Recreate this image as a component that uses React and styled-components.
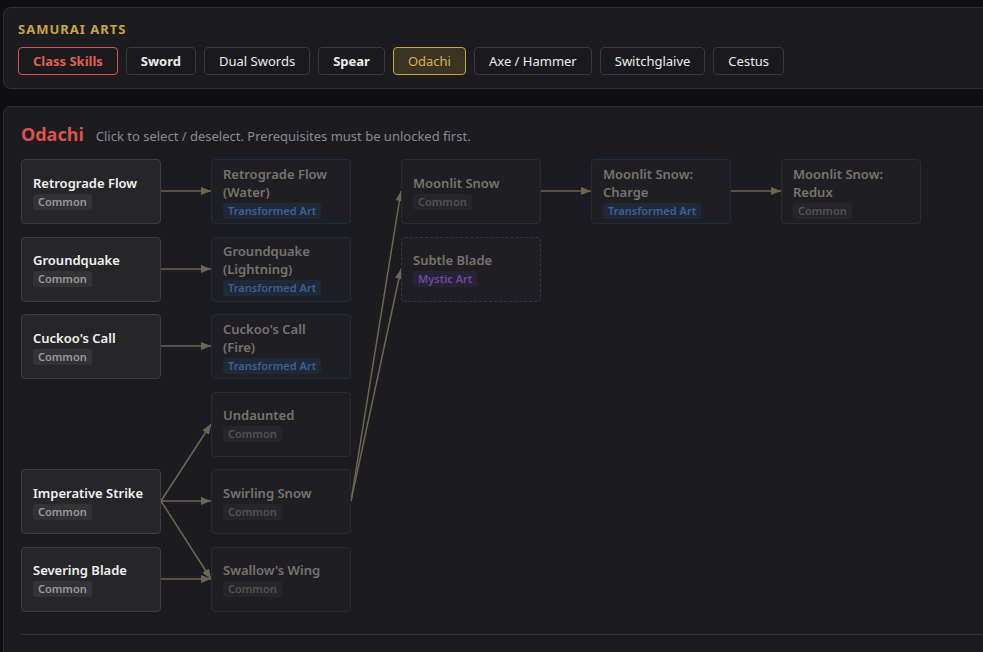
import React from "react";
import styled, { createGlobalStyle } from "styled-components";

const Global = createGlobalStyle`
  html, body { margin: 0; background: #0f0f11; overflow: hidden; }
  body { padding: 7px 0 0 3px; font-family: "Noto Sans", "Open Sans", sans-serif; }
`;

const Panel = styled.section`
  width: 1000px;
  background: #1c1c20;
  border: 1px solid #2e2e33;
  border-radius: 8px;
  box-sizing: border-box;
  padding: ${(p) => p.$pad};
  margin-bottom: ${(p) => p.$mb || 0}px;
`;

const Heading = styled.div`
  color: #c9a640;
  font-size: 13px;
  font-weight: 700;
  letter-spacing: 1px;
  margin-bottom: 9px;
`;

const Tabs = styled.div`
  display: flex;
  gap: 8px;
`;

const Tab = styled.button`
  font-family: inherit;
  font-size: 13px;
  height: 28px;
  padding: 0 14px;
  border-radius: 4px;
  border: 1px solid ${(p) => (p.$kind === "red" ? "#d9534f" : p.$kind === "gold" ? "#c9a640" : "#38383d")};
  background: ${(p) => (p.$kind === "gold" ? "#3b3322" : "#1a1a1e")};
  color: ${(p) => (p.$kind === "red" ? "#e0604f" : p.$kind === "gold" ? "#d6b25a" : "#ececec")};
  font-weight: ${(p) => (p.$bold || p.$kind === "red" ? 700 : 400)};
`;

const TitleRow = styled.div`
  display: flex;
  align-items: baseline;
  gap: 12px;
  margin-bottom: 13px;
`;

const Title = styled.h2`
  margin: 0;
  color: #d9534f;
  font-size: 18px;
  font-weight: 700;
`;

const Hint = styled.span`
  color: #8a8a8e;
  font-size: 13px;
`;

const Tree = styled.div`
  position: relative;
  display: grid;
  grid-template-columns: repeat(5, 140px);
  grid-template-rows: repeat(6, 65px);
  column-gap: 50px;
  row-gap: 12.6px;
`;

const Node = styled.div`
  grid-column: ${(p) => p.$c};
  grid-row: ${(p) => p.$r};
  box-sizing: border-box;
  border-radius: 4px;
  padding: 0 11px;
  display: flex;
  flex-direction: column;
  justify-content: center;
  gap: 2px;
  position: relative;
  z-index: 1;
  background: ${(p) => (p.$on ? "#262629" : "#1f1f23")};
  border: 1px ${(p) => (p.$type === "mystic" ? "dashed" : "solid")}
    ${(p) => (p.$on ? "#3c3c40" : p.$type === "trans" ? "#1f2c3d" : p.$type === "mystic" ? "#3a3150" : "#2b2b30")};
`;

const Name = styled.div`
  font-size: 13px;
  font-weight: 600;
  line-height: 18px;
  color: ${(p) => (p.$on ? "#f2f2f2" : "#77736c")};
`;

const Tag = styled.span`
  align-self: flex-start;
  font-size: 11px;
  font-weight: 600;
  line-height: 16px;
  padding: 0 5px;
  border-radius: 3px;
  background: ${(p) => (p.$type === "trans" ? "#1f2939" : p.$type === "mystic" ? "#282238" : p.$on ? "#333336" : "#26262a")};
  color: ${(p) => (p.$type === "trans" ? "#3f6090" : p.$type === "mystic" ? "#6a4e9a" : p.$on ? "#9a9a9a" : "#55534f")};
`;

const Edges = styled.svg`
  position: absolute;
  left: 0;
  top: 0;
  width: 950px;
  height: 460px;
  overflow: visible;
  z-index: 0;
`;

const Divider = styled.hr`
  border: none;
  border-top: 1px solid #333338;
  margin: 22px 0 0;
`;

const nodes = [
  { n: "Retrograde Flow", c: 1, r: 1, on: true },
  { n: "Groundquake", c: 1, r: 2, on: true },
  { n: "Cuckoo's Call", c: 1, r: 3, on: true },
  { n: "Imperative Strike", c: 1, r: 5, on: true },
  { n: "Severing Blade", c: 1, r: 6, on: true },
  { n: "Retrograde Flow (Water)", c: 2, r: 1, t: "trans" },
  { n: "Groundquake (Lightning)", c: 2, r: 2, t: "trans" },
  { n: "Cuckoo's Call (Fire)", c: 2, r: 3, t: "trans" },
  { n: "Undaunted", c: 2, r: 4 },
  { n: "Swirling Snow", c: 2, r: 5 },
  { n: "Swallow's Wing", c: 2, r: 6 },
  { n: "Moonlit Snow", c: 3, r: 1 },
  { n: "Subtle Blade", c: 3, r: 2, t: "mystic" },
  { n: "Moonlit Snow: Charge", c: 4, r: 1, t: "trans" },
  { n: "Moonlit Snow: Redux", c: 5, r: 1 },
];

const tagText = { trans: "Transformed Art", mystic: "Mystic Art" };

const lines = [
  [140, 32, 190, 32],
  [140, 110, 190, 110],
  [140, 187, 190, 187],
  [140, 342, 190, 265],
  [140, 342, 190, 342],
  [140, 342, 190, 420],
  [140, 420, 190, 420],
  [330, 342, 380, 32],
  [330, 342, 380, 110],
  [520, 32, 570, 32],
  [710, 32, 760, 32],
];

const tabs = [
  ["Class Skills", "red"],
  ["Sword", null, true],
  ["Dual Swords"],
  ["Spear", null, true],
  ["Odachi", "gold"],
  ["Axe / Hammer"],
  ["Switchglaive"],
  ["Cestus"],
];

export default function App() {
  return (
    <>
      <Global />
      <Panel $pad="12px 14px 13px" $mb={17}>
        <Heading>SAMURAI ARTS</Heading>
        <Tabs>
          {tabs.map(([t, k, b]) => (
            <Tab key={t} $kind={k} $bold={b}>{t}</Tab>
          ))}
        </Tabs>
      </Panel>
      <Panel $pad="15px 17px 40px">
        <TitleRow>
          <Title>Odachi</Title>
          <Hint>Click to select / deselect. Prerequisites must be unlocked first.</Hint>
        </TitleRow>
        <Tree>
          <Edges>
            <defs>
              <marker id="ah" markerWidth="10" markerHeight="8" refX="10" refY="4" orient="auto" markerUnits="userSpaceOnUse">
                <path d="M0,0 L10,4 L0,8 z" fill="#6e6550" />
              </marker>
            </defs>
            {lines.map(([a, b, c, d], i) => (
              <line key={i} x1={a} y1={b} x2={c} y2={d} stroke="#6e6550" strokeWidth="1.5" markerEnd="url(#ah)" />
            ))}
          </Edges>
          {nodes.map((x) => (
            <Node key={x.n} $c={x.c} $r={x.r} $on={x.on} $type={x.t}>
              <Name $on={x.on}>{x.n}</Name>
              <Tag $on={x.on} $type={x.t}>{tagText[x.t] || "Common"}</Tag>
            </Node>
          ))}
        </Tree>
        <Divider />
      </Panel>
    </>
  );
}
